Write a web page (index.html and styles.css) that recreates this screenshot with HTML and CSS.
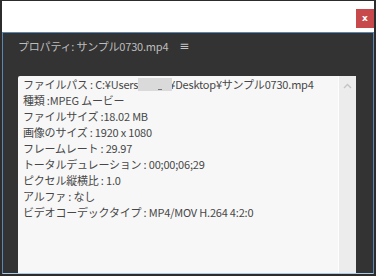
FILE: index.html
```html
<!DOCTYPE html>
<html lang="ja">
<head>
<meta charset="utf-8">
<link rel="stylesheet" href="styles.css">
</head>
<body>
<div class="frame">
  <div class="titlebar">
    <button class="close">x</button>
  </div>
  <div class="panel">
    <div class="panel-head">
      <span class="panel-title">プロパティ: サンプル0730.mp4</span>
      <span class="menu">≡</span>
    </div>
    <div class="box">
      <div class="lines">
        <div class="line">ファイルパス : C:¥Users<span class="redact"><span class="mark"></span></span>¥Desktop¥サンプル0730.mp4</div>
        <div class="line">種類 :MPEG ムービー</div>
        <div class="line">ファイルサイズ :18.02 MB</div>
        <div class="line">画像のサイズ : 1920 x 1080</div>
        <div class="line">フレームレート : 29.97</div>
        <div class="line">トータルデュレーション : 00;00;06;29</div>
        <div class="line">ピクセル縦横比 : 1.0</div>
        <div class="line">アルファ : なし</div>
        <div class="line">ビデオコーデックタイプ : MP4/MOV H.264 4:2:0</div>
      </div>
      <div class="scrollbar">
        <svg class="arrow" width="9" height="6" viewBox="0 0 9 6"><path d="M1 5 L4.5 1.5 L8 5" fill="none" stroke="#c4c4c4" stroke-width="1.4"/></svg>
      </div>
    </div>
  </div>
</div>
</body>
</html>
```
FILE: styles.css
```css
html, body {
  margin: 0;
  padding: 0;
}
body {
  width: 376px;
  height: 276px;
  overflow: hidden;
  font-family: "Noto Sans CJK JP", "Noto Sans", sans-serif;
}
.frame {
  box-sizing: border-box;
  width: 376px;
  height: 276px;
  background: #2c2c2c;
  padding: 1px 2px 2px 2px;
  display: flex;
  flex-direction: column;
}
.titlebar {
  height: 31px;
  background: #ffffff;
  display: flex;
  justify-content: flex-end;
  align-items: flex-start;
  padding-top: 8px;
  box-sizing: border-box;
}
.close {
  width: 18px;
  height: 19px;
  margin: 0;
  padding: 0;
  border: none;
  background: #c8494c;
  color: #ffffff;
  font-family: "DejaVu Sans", sans-serif;
  font-weight: bold;
  font-size: 9px;
  line-height: 17px;
  text-align: center;
}
.panel {
  flex: 1;
  border: 1px solid #5d87b0;
  border-bottom-color: #a8cbe6;
  background: #333333;
  display: flex;
  flex-direction: column;
  min-height: 0;
}
.panel-head {
  height: 43px;
  box-sizing: border-box;
  padding: 4px 0 0 15px;
  display: flex;
  align-items: flex-start;
  color: #bdbdbd;
  font-size: 11px;
}
.panel-title {
  line-height: 18px;
  letter-spacing: -0.2px;
}
.menu {
  margin-left: 11px;
  font-family: "DejaVu Sans", sans-serif;
  font-size: 12px;
  line-height: 18px;
  color: #c4c4c4;
}
.box {
  margin-left: 15px;
  width: 338px;
  flex: 1;
  background: #f7f7f7;
  border-radius: 2px 2px 0 0;
  display: flex;
  min-height: 0;
}
.lines {
  flex: 1;
  padding: 0 0 0 5px;
  color: #474747;
  font-size: 11px;
  line-height: 16px;
  white-space: nowrap;
  overflow: hidden;
  letter-spacing: -0.2px;
}
.line {
  height: 16px;
}
.redact {
  display: inline-block;
  width: 34px;
  height: 13px;
  background: #dadada;
  vertical-align: -2px;
  margin-right: -3px;
  position: relative;
}
.mark {
  position: absolute;
  left: 20px;
  bottom: 1px;
  width: 4px;
  height: 1px;
  background: #777777;
}
.scrollbar {
  width: 18px;
  background: #ececec;
  border-left: 1px solid #fdfdfd;
  display: flex;
  justify-content: center;
  align-items: flex-start;
  padding-top: 7px;
  box-sizing: border-box;
}
.arrow {
  display: block;
}
```
